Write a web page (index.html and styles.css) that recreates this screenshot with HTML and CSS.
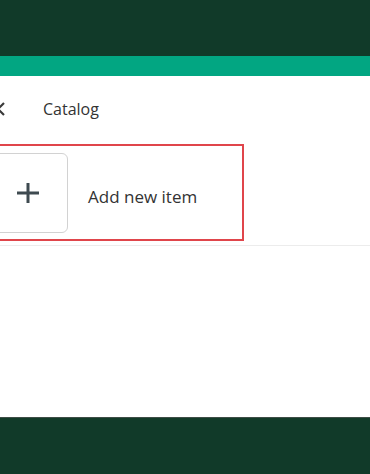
FILE: index.html
```html
<!DOCTYPE html>
<html lang="en">
<head>
  <meta charset="UTF-8">
  <meta name="viewport" content="width=device-width, initial-scale=1.0">
  <title>Catalog</title>
  <link rel="stylesheet" href="styles.css">
</head>
<body>
  <header class="topbar"></header>
  <div class="accent"></div>

  <main class="main">
    <!-- Title row -->
    <div class="titlebar">
      <svg class="back" width="12" height="14" viewBox="0 0 12 14">
        <path d="M9 1 L3 7 L9 13" fill="none" stroke="#3a3a3a" stroke-width="2.2"/>
      </svg>
      <span class="title">Catalog</span>
    </div>

    <!-- Add item row -->
    <div class="add-row">
      <div class="tile">
        <svg width="24" height="24" viewBox="0 0 24 24">
          <path d="M12 2 V22 M1 12 H23" stroke="#3e4a50" stroke-width="3"/>
        </svg>
      </div>
      <span class="add-label">Add new item</span>
    </div>
    <div class="divider"></div>
  </main>

  <footer class="footer"></footer>
</body>
</html>
```

FILE: styles.css
```css
body {
  font-family: 'Open Sans', sans-serif;
  margin: 0;
  padding: 0;
  height: 474px;
  display: flex;
  flex-direction: column;
  color: #333;
  background-color: #fff;
  overflow: hidden;
}

.topbar {
  height: 56px;
  background-color: #113a29;
}

.accent {
  height: 20px;
  background-color: #02a682;
}

.main {
  flex: 1;
  background-color: #fff;
}

.titlebar {
  height: 66px;
  display: flex;
  align-items: center;
  margin-bottom: 2px;
}

.back {
  margin-left: -5px;
  margin-right: 36px;
}

.title {
  font-size: 16px;
}

.add-row {
  box-sizing: border-box;
  width: 266px;
  margin-left: -22px;
  border: 2px solid #e0454b;
  padding: 7px 8px 6px;
  display: flex;
  align-items: center;
  gap: 20px;
}

.tile {
  width: 78px;
  height: 78px;
  border: 1px solid #d2d2d2;
  border-radius: 6px;
  display: flex;
  align-items: center;
  justify-content: center;
}

.add-label {
  font-size: 17px;
  margin-top: 6px;
}

.divider {
  margin-top: 4px;
  height: 1px;
  background-color: #ececec;
}

.footer {
  height: 56px;
  background-color: #113a29;
  border-top: 1px solid #3e4d46;
}
```
